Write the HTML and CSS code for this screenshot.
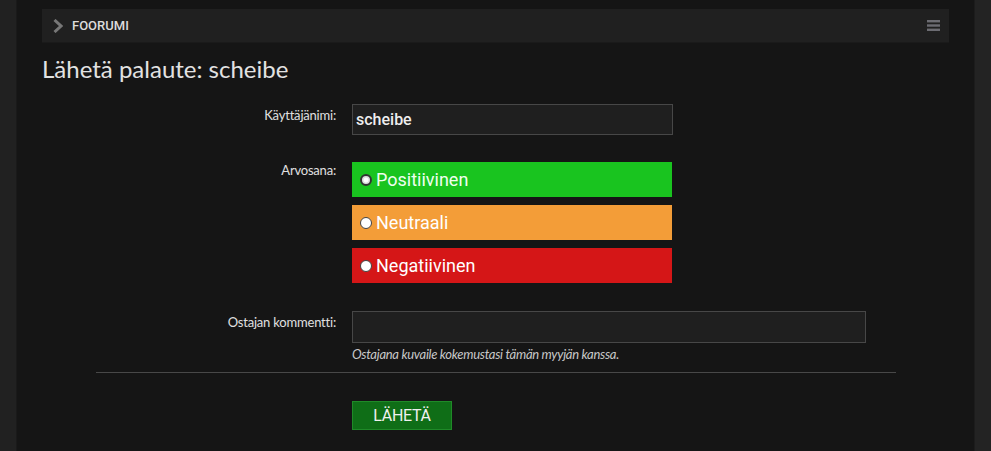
FILE: index.html
```html
<!DOCTYPE html>
<html lang="fi">
<head>
<meta charset="utf-8">
<title>Lähetä palaute: scheibe</title>
<link rel="stylesheet" href="styles.css">
</head>
<body>
<div class="page">
  <div class="gutter"></div>
  <main class="panel">
    <nav class="crumbs">
      <div class="crumb">
        <svg class="chev" width="10" height="14" viewBox="0 0 10 14"><path d="M1.5 1 L8 7 L1.5 13" fill="none" stroke="#777" stroke-width="3"/></svg>
        <span>FOORUMI</span>
      </div>
      <svg class="menu" width="13" height="11" viewBox="0 0 13 11"><rect x="0" y="0" width="13" height="2.4" fill="#6c6c72"/><rect x="0" y="4.3" width="13" height="2.4" fill="#6c6c72"/><rect x="0" y="8.6" width="13" height="2.4" fill="#6c6c72"/></svg>
    </nav>
    <h1 class="title">Lähetä palaute: scheibe</h1>
    <form class="form">
      <div class="row">
        <label class="lbl">Käyttäjänimi:</label>
        <div class="field"><div class="input user">scheibe</div></div>
      </div>
      <div class="row rating-row">
        <label class="lbl lbl-top">Arvosana:</label>
        <div class="field options">
          <div class="opt pos"><span class="radio checked"></span>Positiivinen</div>
          <div class="opt neu"><span class="radio"></span>Neutraali</div>
          <div class="opt neg"><span class="radio"></span>Negatiivinen</div>
        </div>
      </div>
      <div class="row comment-row">
        <label class="lbl">Ostajan kommentti:</label>
        <div class="field">
          <div class="input comment"></div>
          <p class="hint">Ostajana kuvaile kokemustasi tämän myyjän kanssa.</p>
        </div>
      </div>
      <hr class="divider">
      <div class="row submit-row">
        <span class="lbl"></span>
        <div class="field"><button type="button" class="submit">LÄHETÄ</button></div>
      </div>
    </form>
  </main>
  <div class="side"></div>
</div>
</body>
</html>
```
FILE: styles.css
```css
html, body {
  margin: 0;
  padding: 0;
  background: #212121;
  height: 100%;
  overflow: hidden;
}
.page {
  display: flex;
  height: 451px;
}
.gutter {
  width: 17px;
  flex: none;
  background: #212121;
  border-right: 1px solid #1a1a1a;
  box-sizing: border-box;
}
.panel {
  width: 957px;
  flex: none;
  background: #151515;
  padding: 9px 25px 0;
  box-sizing: border-box;
}
.side {
  flex: 1;
  background: #232323;
  border-left: 1px solid #1c1c1c;
}
.crumbs {
  height: 34px;
  background: #202020;
  border-bottom: 1px solid #1a1a1a;
  box-sizing: border-box;
  display: flex;
  align-items: center;
  justify-content: space-between;
  padding: 0 9px 0 11px;
}
.crumb {
  display: flex;
  align-items: center;
  gap: 9px;
  font-family: Roboto, sans-serif;
  font-size: 13px;
  font-weight: 500;
  color: #dcdcdc;
}
.title {
  margin: 12px 0 0;
  font-family: Lato, sans-serif;
  font-weight: 400;
  font-size: 24px;
  line-height: 28px;
  color: #e2e2e2;
}
.form {
  margin-top: 21px;
}
.row {
  display: grid;
  grid-template-columns: 294px 1fr;
  column-gap: 16px;
  align-items: start;
}
.lbl {
  text-align: right;
  font-family: Lato, sans-serif;
  font-size: 13px;
  letter-spacing: -0.2px;
  color: #e0e0e0;
  padding-top: 3px;
}
.lbl-top {
  padding-top: 0;
}
.input {
  background: #1f1f1f;
  border: 1px solid #474747;
  box-sizing: border-box;
  height: 31px;
}
.user {
  width: 321px;
  font-family: Roboto, sans-serif;
  font-weight: 500;
  font-size: 16px;
  color: #eeeeee;
  padding: 5px 0 0 3px;
}
.rating-row {
  margin-top: 27px;
}
.options {
  display: flex;
  flex-direction: column;
  gap: 8px;
  width: 320px;
}
.opt {
  height: 35px;
  display: flex;
  align-items: center;
  font-family: Roboto, sans-serif;
  font-size: 18px;
  color: #fff;
  padding-left: 8px;
  gap: 4px;
  box-sizing: border-box;
}
.pos { background: #19c41f; color: #f0fff0; }
.neu { background: #f39d38; }
.neg { background: #d51617; }
.radio {
  width: 12px;
  height: 12px;
  border-radius: 50%;
  background: #fff;
  border: 1px solid #444;
  box-sizing: border-box;
}
.radio.checked {
  border: 2px solid #333;
  background: radial-gradient(circle, #fff 0 2px, #ddd 3px);
}
.comment-row {
  margin-top: 28px;
}
.comment {
  width: 514px;
  height: 32px;
}
.hint {
  margin: 4px 0 0;
  font-family: Lato, sans-serif;
  font-style: italic;
  font-size: 13px;
  line-height: 14px;
  letter-spacing: -0.3px;
  color: #c8c8c8;
}
.divider {
  margin: 11px 0 0 54px;
  width: 800px;
  border: 0;
  border-top: 1px solid #484848;
  height: 0;
}
.submit-row {
  margin-top: 28px;
}
.submit {
  width: 100px;
  height: 29px;
  background: #0f6e17;
  border: 1px solid #1f8a28;
  color: #f0f0f0;
  font-family: Roboto, sans-serif;
  font-size: 16px;
  letter-spacing: -0.3px;
  padding: 0;
  cursor: pointer;
}
```
